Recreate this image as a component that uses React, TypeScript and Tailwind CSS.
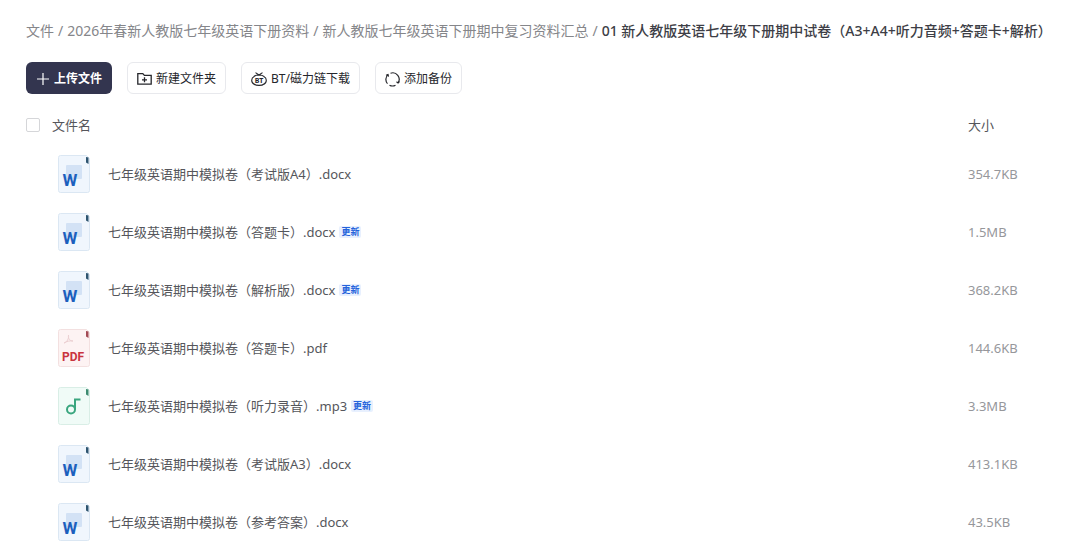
import type React from "react";

type FileKind = "docx" | "pdf" | "mp3";

interface FileEntry {
	name: string;
	kind: FileKind;
	size: string;
	updated?: boolean;
}

const parents = ["文件", "2026年春新人教版七年级英语下册资料", "新人教版七年级英语下册期中复习资料汇总"];
const current = "01 新人教版英语七年级下册期中试卷（A3+A4+听力音频+答题卡+解析）";

const files: FileEntry[] = [
	{ name: "七年级英语期中模拟卷（考试版A4）.docx", kind: "docx", size: "354.7KB" },
	{ name: "七年级英语期中模拟卷（答题卡）.docx", kind: "docx", size: "1.5MB", updated: true },
	{ name: "七年级英语期中模拟卷（解析版）.docx", kind: "docx", size: "368.2KB", updated: true },
	{ name: "七年级英语期中模拟卷（答题卡）.pdf", kind: "pdf", size: "144.6KB" },
	{ name: "七年级英语期中模拟卷（听力录音）.mp3", kind: "mp3", size: "3.3MB", updated: true },
	{ name: "七年级英语期中模拟卷（考试版A3）.docx", kind: "docx", size: "413.1KB" },
	{ name: "七年级英语期中模拟卷（参考答案）.docx", kind: "docx", size: "43.5KB" },
];

const PlusIcon = () => (
	<svg width="14" height="14" viewBox="0 0 14 14" fill="none" stroke="currentColor" strokeWidth="1.2" aria-hidden="true">
		<path d="M7 1v12M1 7h12" />
	</svg>
);

const FolderPlusIcon = () => (
	<svg width="15" height="14" viewBox="0 0 15 14" fill="none" stroke="currentColor" strokeWidth="1.3" aria-hidden="true">
		<path d="M.8 12.2V1.6h5l1.6 1.8h6.8v8.8zM7.5 5.3v5M5 7.8h5" />
	</svg>
);

const TorrentIcon = () => (
	<svg width="16" height="14" viewBox="0 0 16 14" fill="none" stroke="currentColor" strokeWidth="1.1" aria-hidden="true">
		<path d="M4.5 .6L8 3 11.5 .6M3 4.5c1-1 2.8-1.5 5-1.5s4 .5 5 1.5M3 12c1 1 2.8 1.4 5 1.4s4-.4 5-1.4" />
		<path d="M3.2 4.4C1.4 5.2.7 6.5.7 8.2s.7 3.2 2.5 4M12.8 4.4c1.8.8 2.5 2.1 2.5 3.8s-.7 3.2-2.5 4" />
		<text x="8" y="11" textAnchor="middle" fontSize="7" fontWeight="700" fill="currentColor" stroke="none">
			BT
		</text>
	</svg>
);

const BackupIcon = () => (
	<svg width="15" height="15" viewBox="0 0 15 15" fill="none" stroke="currentColor" strokeWidth="1.2" aria-hidden="true">
		<path d="M5.5 1.2A6.5 6.5 0 0 1 13 11M10.5 13.2A6.5 6.5 0 0 1 4.5 13.2M2.5 11.7A6.5 6.5 0 0 1 3 2.6" />
		<path d="M14.5 9.5L13 11l-1.5-1.2M1 3.2L3 2.6l.5 2" />
	</svg>
);

const palette = {
	docx: { fill: "#f0f6fd", edge: "#dbe7f3", tab: "#2e5570" },
	pdf: { fill: "#fdf3f3", edge: "#f3e0e0", tab: "#a34a55" },
	mp3: { fill: "#f0fbf7", edge: "#d9eee6", tab: "#3c8b70" },
};

const FileIcon = ({ kind }: { kind: FileKind }) => {
	const { fill, edge, tab } = palette[kind];
	return (
		<svg width="32" height="38" viewBox="0 0 32 38" className="shrink-0" aria-hidden="true">
			<path d="M2.5 .5h26l3 3V35.5a2 2 0 0 1-2 2h-27a2 2 0 0 1-2-2v-33a2 2 0 0 1 2-2z" fill={fill} stroke={edge} />
			<path d="M28 2l2.5 .5V9L28 7.5z" fill={tab} />
			{kind === "docx" && (
				<>
					<rect x="8" y="10" width="16" height="14" rx="1" fill="#d3e2f5" />
					<text x="12" y="31" textAnchor="middle" fontSize="17" fontWeight="700" fill="#1c60bd" className="font-[Roboto,sans-serif]">
						W
					</text>
				</>
			)}
			{kind === "pdf" && (
				<>
					<path d="M6 14c3-1 5-4 4.5-8-.5 4 1.5 6 4.5 6-3-.5-6 .3-9 2z" fill="none" stroke="#ecd0d2" />
					<text x="15" y="32" textAnchor="middle" fontSize="12" fontWeight="700" fill="#c9343f" className="font-[Roboto,sans-serif]">
						PDF
					</text>
				</>
			)}
			{kind === "mp3" && (
				<g fill="none" stroke="#3aa67f" strokeWidth="2">
					<circle cx="13" cy="22.5" r="4" />
					<path d="M17 22.5V12.5h5.5" />
				</g>
			)}
		</svg>
	);
};

const ToolButton = ({ icon, children }: { icon: React.ReactNode; children: React.ReactNode }) => (
	<button type="button" className="flex items-center gap-1 rounded-md border border-[#e8e9ed] bg-white px-[9px] pt-1.5 pb-1 text-xs leading-5 text-[#25262b]">
		{icon}
		{children}
	</button>
);

export default function App(): React.ReactElement {
	return (
		<main className="bg-white pt-[21px] font-['Noto_Sans','Noto_Sans_CJK_SC',sans-serif] text-[#55565b]">
			<nav aria-label="路径" className="pl-6.5">
				<ol className="flex items-center gap-1 whitespace-nowrap text-sm leading-5 text-[#85868a]">
					{parents.map((parent) => (
						<li key={parent} className="flex gap-1">
							<a href="#">{parent}</a>
							<span>/</span>
						</li>
					))}
					<li className="font-medium text-[#3d3e46]">{current}</li>
				</ol>
			</nav>

			<div className="mt-[21px] flex gap-[15px] pl-6.5">
				<button type="button" className="flex items-center gap-1 rounded-md bg-[#33354f] px-2.5 pt-1.5 pb-1 text-xs leading-5 font-bold text-white">
					<PlusIcon />
					上传文件
				</button>
				<ToolButton icon={<FolderPlusIcon />}>新建文件夹</ToolButton>
				<ToolButton icon={<TorrentIcon />}>BT/磁力链下载</ToolButton>
				<ToolButton icon={<BackupIcon />}>添加备份</ToolButton>
			</div>

			<table className="mt-2.5 w-full table-fixed text-left text-[13px] leading-5">
				<thead>
					<tr className="h-[41px]">
						<th className="pl-6.5 font-normal">
							<span className="flex items-center gap-3">
								<input type="checkbox" aria-label="全选" className="size-3.5 appearance-none rounded-xs border border-[#d5d6d9] bg-white" />
								文件名
							</span>
						</th>
						<th className="w-28 font-normal">大小</th>
					</tr>
				</thead>
				<tbody>
					{files.map((file) => (
						<tr key={file.name} className="h-[58px]">
							<td className="pl-14.5">
								<div className="flex items-center">
									<FileIcon kind={file.kind} />
									<span className="ml-4.5">{file.name}</span>
									{file.updated && (
										<span className="ml-1 rounded-xs bg-[#e8f0fe] px-0.5 text-[9px] leading-3 font-bold text-[#2463db]">更新</span>
									)}
								</div>
							</td>
							<td className="text-[#96979b]">{file.size}</td>
						</tr>
					))}
				</tbody>
			</table>
		</main>
	);
}
